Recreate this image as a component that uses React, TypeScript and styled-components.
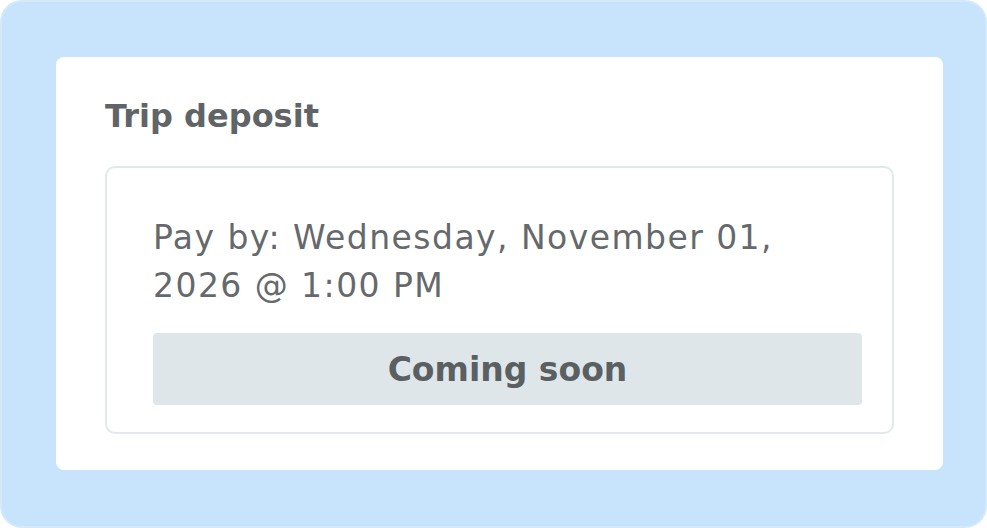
import React from "react";
import styled, { createGlobalStyle } from "styled-components";

const Global = createGlobalStyle`
  html, body { margin: 0; padding: 0; background: #ffffff; }
  body { font-family: "DejaVu Sans", "Open Sans", sans-serif; }
  * { box-sizing: border-box; }
`;

const Frame = styled.div`
  width: 987px;
  height: 528px;
  background: #c7e4fc;
  border: 2px solid #d4eafb;
  border-radius: 22px;
  padding: 55px 42px 56px 54px;
`;

const Card = styled.section`
  background: #ffffff;
  border-radius: 8px;
  height: 100%;
  padding: 37px 49px 36px 49px;
  display: flex;
  flex-direction: column;
`;

const Title = styled.h2`
  margin: 0;
  font-size: 32px;
  line-height: 44px;
  font-weight: 700;
  color: #606467;
`;

const Panel = styled.div`
  margin-top: 28px;
  flex: 1;
  border: 2px solid #e1e9ea;
  border-radius: 10px;
  padding: 46px 30px 27px 46px;
  display: flex;
  flex-direction: column;
`;

const Due = styled.p`
  margin: 0;
  font-size: 33px;
  line-height: 48px;
  font-weight: 400;
  color: #65696c;
  letter-spacing: 1.45px;
`;

const Status = styled.div`
  margin-top: auto;
  height: 72px;
  background: #dfe6e9;
  border-radius: 4px;
  display: flex;
  align-items: center;
  justify-content: center;
  font-size: 33px;
  font-weight: 700;
  color: #5a5f62;
`;

export default function App() {
  return (
    <>
      <Global />
      <Frame>
        <Card>
          <Title>Trip deposit</Title>
          <Panel>
            <Due>
              Pay by: Wednesday, November 01,
              <br />
              2026 @ 1:00 PM
            </Due>
            <Status>Coming soon</Status>
          </Panel>
        </Card>
      </Frame>
    </>
  );
}
